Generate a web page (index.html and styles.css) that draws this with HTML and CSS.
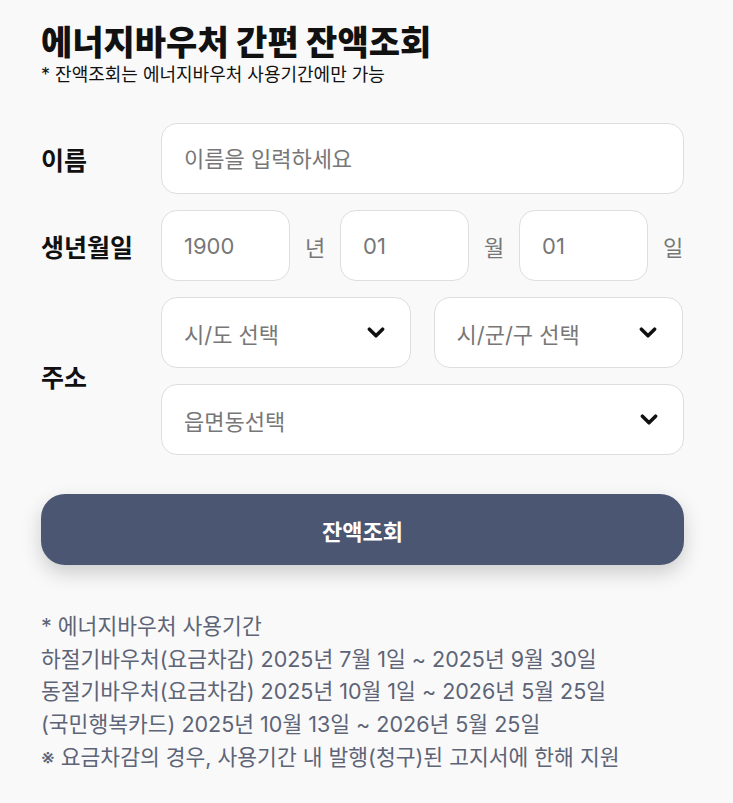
FILE: index.html
```html
<!DOCTYPE html>
<html lang="ko">
<head>
    <meta charset="UTF-8">
    <meta name="viewport" content="width=device-width, initial-scale=1.0">
    <title>에너지바우처 간편 잔액조회</title>
    <link rel="stylesheet" href="styles.css">
</head>
<body>
    <div class="page">
        <h1 class="title">에너지바우처 간편 잔액조회</h1>
        <p class="subtitle">* 잔액조회는 에너지바우처 사용기간에만 가능</p>

        <form class="form" onsubmit="return false">
            <div class="row">
                <label class="label">이름</label>
                <div class="field">
                    <input class="input" type="text" placeholder="이름을 입력하세요">
                </div>
            </div>

            <div class="row">
                <label class="label">생년월일</label>
                <div class="field birth">
                    <input class="input small" type="text" placeholder="1900">
                    <span class="unit">년</span>
                    <input class="input small" type="text" placeholder="01">
                    <span class="unit">월</span>
                    <input class="input small" type="text" placeholder="01">
                    <span class="unit">일</span>
                </div>
            </div>

            <div class="row">
                <label class="label">주소</label>
                <div class="field address">
                    <div class="select">
                        <span>시/도 선택</span>
                        <svg class="chevron" viewBox="0 0 16 10"><path d="M2 2l6 6 6-6" /></svg>
                    </div>
                    <div class="select">
                        <span>시/군/구 선택</span>
                        <svg class="chevron" viewBox="0 0 16 10"><path d="M2 2l6 6 6-6" /></svg>
                    </div>
                    <div class="select wide">
                        <span>읍면동선택</span>
                        <svg class="chevron" viewBox="0 0 16 10"><path d="M2 2l6 6 6-6" /></svg>
                    </div>
                </div>
            </div>

            <button class="submit" type="submit">잔액조회</button>
        </form>

        <div class="notes">
            <p>* 에너지바우처 사용기간</p>
            <p>하절기바우처(요금차감) 2025년 7월 1일 ~ 2025년 9월 30일</p>
            <p>동절기바우처(요금차감) 2025년 10월 1일 ~ 2026년 5월 25일</p>
            <p>(국민행복카드) 2025년 10월 13일 ~ 2026년 5월 25일</p>
            <p>※ 요금차감의 경우, 사용기간 내 발행(청구)된 고지서에 한해 지원</p>
        </div>
    </div>
</body>
</html>
```

FILE: styles.css
```css
/* Energy voucher balance page */
body {
    margin: 0;
    background-color: #f9f9f9;
    font-family: Inter, "Noto Sans CJK KR", sans-serif;
    color: #111;
}

.page {
    width: 643px;
    padding: 20px 0 0 41px;
}

.title {
    margin: 0;
    font-size: 34px;
    font-weight: 800;
    line-height: 46px;
}

.subtitle {
    margin: -3px 0 0;
    font-size: 18px;
    line-height: 24px;
    color: #111;
}

.form {
    margin-top: 36px;
    display: flex;
    flex-direction: column;
    gap: 16px;
}

.row {
    display: flex;
    align-items: center;
}

.label {
    width: 120px;
    flex-shrink: 0;
    font-size: 25px;
    font-weight: 700;
}

.field {
    flex: 1;
    display: flex;
    gap: 16px;
}

.input,
.select {
    box-sizing: border-box;
    height: 71px;
    border: 1px solid #dedede;
    border-radius: 16px;
    background: #fff;
    font-family: inherit;
    font-size: 22px;
    color: #777;
    padding: 0 22px;
}

.input {
    width: 100%;
    outline: none;
}

.input::placeholder {
    color: #777;
}

.birth {
    align-items: center;
    gap: 15px;
}

.input.small {
    width: 129px;
    flex-shrink: 0;
}

.unit {
    font-size: 22px;
    color: #777;
    width: 20px;
    text-align: center;
}

.address {
    flex-wrap: wrap;
}

.select {
    width: calc(50% - 12px);
    display: flex;
    align-items: center;
    justify-content: space-between;
    padding-right: 25px;
}

.select:nth-child(2) {
    margin-left: 7px;
}

.select.wide {
    width: 100%;
}

.chevron {
    width: 18px;
    height: 11px;
    fill: none;
    stroke: #111;
    stroke-width: 3.2;
    stroke-linecap: round;
    stroke-linejoin: round;
}

.submit {
    margin-top: 23px;
    height: 71px;
    border: none;
    border-radius: 24px;
    background-color: #4b5672;
    color: #fff;
    font-family: inherit;
    font-size: 22px;
    font-weight: 700;
    box-shadow: 0 8px 20px rgba(0, 0, 0, 0.18);
    cursor: pointer;
}

.notes {
    margin-top: 45px;
    color: #5d6477;
    font-size: 21.5px;
    line-height: 32.7px;
}

.notes p {
    margin: 0;
}
```
